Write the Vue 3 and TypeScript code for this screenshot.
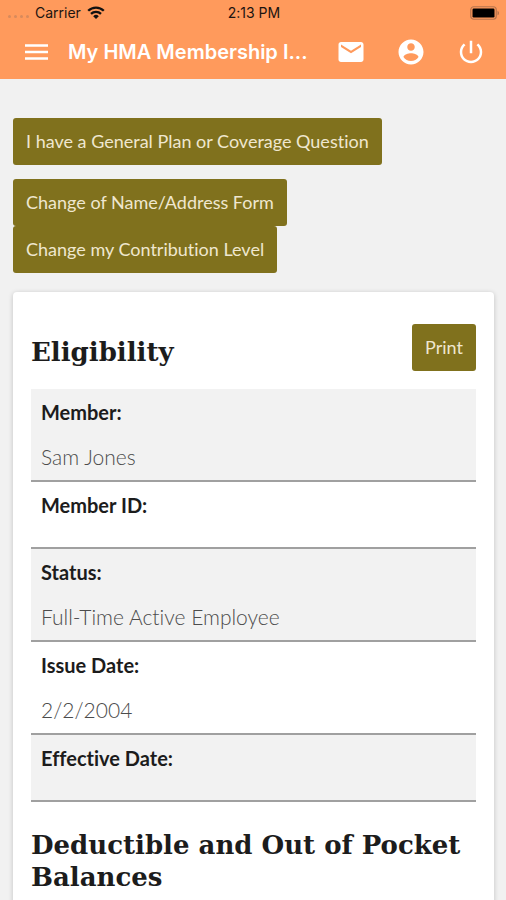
<script setup lang="ts">
interface Field {
  label: string
  value: string
}

const questions: string[] = ['I have a General Plan or Coverage Question']
const forms: string[] = ['Change of Name/Address Form', 'Change my Contribution Level']

const fields: Field[] = [
  { label: 'Member:', value: 'Sam Jones' },
  { label: 'Member ID:', value: '' },
  { label: 'Status:', value: 'Full-Time Active Employee' },
  { label: 'Issue Date:', value: '2/2/2004' },
  { label: 'Effective Date:', value: '' },
]

function printPage(): void {
  window.print()
}
</script>

<template>
  <div class="page">
    <header class="header">
      <div class="status">
        <div class="carrier">
          <span class="signal"><i v-for="n in 4" :key="n"></i></span>
          <span>Carrier</span>
          <svg class="wifi" viewBox="0 0 18 13" aria-hidden="true">
            <path d="M1.2 4.8a11 11 0 0 1 15.6 0M4 7.9a7.1 7.1 0 0 1 10 0" fill="none" stroke="#111" stroke-width="2.3" />
            <path d="M9 13 6.2 10.2a4 4 0 0 1 5.6 0z" fill="#111" />
          </svg>
        </div>
        <span>2:13 PM</span>
        <div class="power">
          <svg class="battery" viewBox="0 0 30 14" aria-hidden="true">
            <rect x=".75" y=".75" width="25.5" height="12.5" rx="3" fill="none" stroke="#b8744c" stroke-width="1.2" />
            <rect x="2.5" y="2.5" width="22" height="9" rx="1.2" fill="#000" />
            <path d="M27.5 4.7c2 .8 2 3.8 0 4.6z" fill="#b8744c" />
          </svg>
        </div>
      </div>
      <nav class="toolbar">
        <button class="icon-button" type="button" aria-label="Menu">
          <svg class="menu" viewBox="0 0 24 16" aria-hidden="true">
            <path d="M1 1.500h23M1 8h23M1 14.500h23" stroke="#fff" stroke-width="2.4" />
          </svg>
        </button>
        <h1 class="title">My HMA Membership I...</h1>
        <div class="actions">
          <button class="icon-button" type="button" aria-label="Messages">
            <svg class="glyph" viewBox="0 0 24 24" fill="#fff" aria-hidden="true">
              <path d="M20 4H4c-1.1 0-1.99.9-1.99 2L2 18c0 1.1.9 2 2 2h16c1.1 0 2-.9 2-2V6c0-1.100-.9-2-2-2zm0 4-8 5-8-5V6l8 5 8-5z" />
            </svg>
          </button>
          <button class="icon-button" type="button" aria-label="Account">
            <svg class="glyph" viewBox="0 0 24 24" fill="#fff" aria-hidden="true">
              <path d="M12 2C6.480 2 2 6.480 2 12s4.480 10 10 10 10-4.480 10-10S17.520 2 12 2zm0 3c1.660 0 3 1.340 3 3s-1.340 3-3 3-3-1.340-3-3 1.340-3 3-3zm0 14.200c-2.500 0-4.710-1.280-6-3.220.03-1.990 4-3.080 6-3.080 1.990 0 5.970 1.090 6 3.080-1.290 1.940-3.500 3.220-6 3.220z" />
            </svg>
          </button>
          <button class="icon-button" type="button" aria-label="Log out">
            <svg class="glyph" viewBox="0 0 24 24" fill="#fff" aria-hidden="true">
              <path d="M13 3h-2v10h2V3zm4.830 2.170-1.420 1.420C17.990 7.860 19 9.810 19 12c0 3.870-3.130 7-7 7s-7-3.130-7-7c0-2.190 1.010-4.140 2.580-5.420L6.170 5.170C4.230 6.820 3 9.260 3 12c0 4.970 4.030 9 9 9s9-4.030 9-9c0-2.740-1.230-5.180-3.170-6.830z" />
            </svg>
          </button>
        </div>
      </nav>
    </header>

    <main class="content">
      <div class="group">
        <button v-for="text in questions" :key="text" class="button" type="button">{{ text }}</button>
      </div>
      <div class="group">
        <button v-for="text in forms" :key="text" class="button" type="button">{{ text }}</button>
      </div>

      <section class="card">
        <div class="card-head">
          <h2 class="heading">Eligibility</h2>
          <button class="button" type="button" @click="printPage">Print</button>
        </div>
        <dl class="fields">
          <div v-for="field in fields" :key="field.label" class="field">
            <dt>{{ field.label }}</dt>
            <dd>{{ field.value }}</dd>
          </div>
        </dl>
        <h2 class="heading">Deductible and Out of Pocket Balances</h2>
      </section>
    </main>
  </div>
</template>

<style>
html {
  scrollbar-width: none;
}

body {
  margin: 0;
  background: #f1f1f1;
}
</style>

<style scoped>
.page {
  min-height: 100vh;
  color: #1c1c1c;
  font-family: Lato, "Open Sans", sans-serif;
  font-variant-ligatures: none;
}

.header {
  padding-bottom: 1px;
  background: #ff9a5c;
  font-family: Inter, Roboto, sans-serif;
}

.status {
  display: grid;
  grid-template-columns: 1fr auto 1fr;
  align-items: center;
  height: 25px;
  padding: 0 6px 0 8px;
  color: #1c1410;
  font-size: 14px;
}

.carrier {
  display: flex;
  align-items: center;
  gap: 6px;
}

.signal {
  display: flex;
  gap: 3px;
  padding-top: 8px;
}

.signal i {
  width: 3px;
  height: 3px;
  border-radius: 50%;
  background: #d88a5c;
}

.wifi {
  width: 18px;
  height: 13px;
}

.power {
  display: flex;
  justify-content: flex-end;
}

.battery {
  width: 30px;
  height: 14px;
}

.toolbar {
  display: flex;
  align-items: center;
  height: 53px;
  padding: 0 20px 0 24px;
}

.icon-button {
  display: flex;
  padding: 0;
  border: 0;
  background: none;
}

.menu {
  width: 24px;
  height: 16px;
}

.title {
  flex: 1;
  min-width: 0;
  margin: 0 16px 0 20px;
  overflow: hidden;
  color: #fff;
  font-size: 20px;
  font-weight: 600;
  line-height: 28px;
  text-overflow: ellipsis;
  white-space: nowrap;
}

.actions {
  display: flex;
  gap: 30px;
}

.glyph {
  width: 30px;
  height: 30px;
}

.content {
  padding: 39px 12px 0 13px;
}

.group {
  display: flex;
  flex-direction: column;
  align-items: flex-start;
  margin-bottom: 14px;
}

.button {
  height: 47px;
  padding: 0 13px 2px;
  border: 0;
  border-radius: 3px;
  background: #80711d;
  color: #efe7cf;
  font-family: inherit;
  font-size: 18px;
  font-variant-ligatures: none;
  white-space: nowrap;
}

.card {
  margin-top: 19px;
  padding: 32px 18px;
  border-radius: 4px;
  background: #fff;
  box-shadow: 0 1px 5px rgba(0, 0, 0, 0.2);
}

.card-head {
  display: flex;
  align-items: center;
  justify-content: space-between;
  margin-bottom: 18px;
}

.heading {
  margin: 0;
  padding-top: 8px;
  font-family: "DejaVu Serif", serif;
  font-size: 26px;
  font-weight: 700;
  line-height: 32px;
}

.fields {
  margin: 0 0 19px;
}

.field {
  border-bottom: 2px solid #a0a0a0;
}

.field:nth-child(odd) {
  background: #f2f2f2;
}

.field dt {
  padding: 10px 10px 9px;
  font-size: 20px;
  font-weight: 700;
  line-height: 26px;
}

.field dd {
  margin: 0;
  padding: 10px;
  color: #4c4c4c;
  font-size: 21px;
  font-weight: 300;
  line-height: 26px;
}
</style>
